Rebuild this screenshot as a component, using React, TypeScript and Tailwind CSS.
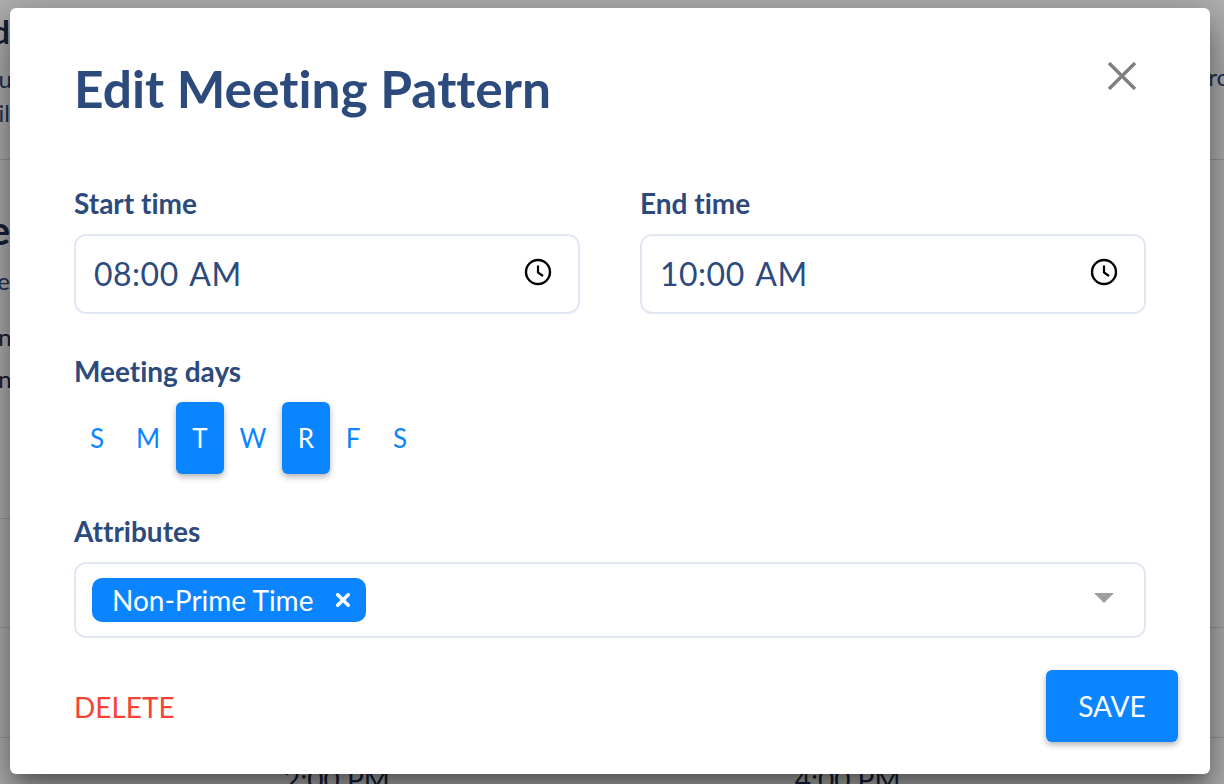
const font = "font-['Lato','Liberation_Sans',sans-serif] [font-variant-ligatures:none]";

const ClockIcon = () => (
  <svg width="28" height="28" viewBox="0 0 28 28" fill="none" stroke="#000" strokeWidth="2.4">
    <circle cx="14" cy="14" r="12" />
    <path d="M14 7.5V14.5L19 18" strokeWidth="2.2" />
  </svg>
);

const CloseIcon = ({ size, width }: { size: number; width: number }) => (
  <svg width={size} height={size} viewBox="0 0 28 28" fill="none" stroke="currentColor" strokeWidth={width}>
    <path d="M1 1L27 27M27 1L1 27" />
  </svg>
);

const TimeField = ({ label, value }: { label: string; value: string }) => (
  <div className="flex flex-col">
    <label className="-mt-px h-[40px] text-[28px] leading-[40px] font-bold text-[#2c4a7c]">{label}</label>
    <div className="mt-[11px] flex h-[80px] items-center justify-between rounded-[12px] border-2 border-[#e2e8f3] pl-[18px] pr-[26px]">
      <span className="text-[32px] tracking-[0.5px] whitespace-pre text-[#2c4a7c] [word-spacing:3px]">{value}</span>
      <span className="-mt-[4px] flex"><ClockIcon /></span>
    </div>
  </div>
);

const days = [
  { d: "S", w: "w-[46px]" },
  { d: "M", w: "w-[56px]" },
  { d: "T", w: "w-[48px]", on: true },
  { d: "W", w: "w-[58px]" },
  { d: "R", w: "w-[48px]", on: true },
  { d: "F", w: "w-[46px]" },
  { d: "S", w: "w-[48px]" },
];

const Background = () => (
  <div className="h-[784px] overflow-hidden bg-white text-[#1f3050]">
    <div className="flex h-[160px] justify-between border-b border-[#d5dbe5]">
      <div className="flex w-[10px] flex-col items-end">
        <span className="mt-[8px] whitespace-nowrap text-[32px] leading-[48px] font-bold">d</span>
        <span className="-mr-[2px] mt-[6px] whitespace-nowrap text-[24px] leading-[34px] text-[#2c4a7c]">u</span>
        <span className="whitespace-nowrap text-[24px] leading-[34px] text-[#2c4a7c]">il</span>
      </div>
      <span className="-mr-[6px] mt-[60px] h-[34px] text-[24px] leading-[34px] text-[#2c4a7c]">ro</span>
    </div>
    <div className="flex h-[359px] w-[10px] flex-col items-end border-b border-[#d5dbe5]">
      <span className="mt-[46px] text-[40px] leading-[48px] font-bold">e</span>
      <span className="mt-[10px] text-[24px] leading-[34px] text-[#2c4a7c]">e</span>
      <span className="-mr-[14px] mt-[20px] text-[24px] leading-[38px]">ng</span>
      <span className="-mr-[14px] mt-[4px] text-[24px] leading-[38px]">ng</span>
    </div>
    <div className="h-[109px] border-b border-[#d5dbe5]" />
    <div className="h-[110px] border-b border-[#d5dbe5]" />
    <div className="flex pt-[24px] text-[28px] leading-[34px]">
      <span className="ml-[284px]">2:00 PM</span>
      <span className="ml-[405px]">4:00 PM</span>
    </div>
  </div>
);

export default function App() {
  return (
    <div className={`relative h-[784px] w-[1224px] overflow-hidden ${font}`}>
      <Background />
      <div className="absolute inset-0 flex items-start bg-black/30 pl-[10px] pt-[8px]">
        <div className="flex h-[766px] w-[1200px] flex-col rounded-[6px] bg-white pl-[64px] pr-[32px] shadow-[0_11px_15px_-7px_rgba(0,0,0,0.3),0_24px_38px_3px_rgba(0,0,0,0.22),0_9px_46px_8px_rgba(0,0,0,0.22)]">
          <div className="flex items-start justify-between">
            <h1 className="mt-[48px] text-[51.5px] leading-[64px] font-bold text-[#2c4a7c]">Edit Meeting Pattern</h1>
            <button className="mt-[54px] mr-[42px] flex text-[#808080]">
              <CloseIcon size={28} width={3.4} />
            </button>
          </div>

          <div className="mt-[64px] grid grid-cols-[506px_506px] gap-x-[60px]">
            <TimeField label="Start time" value="08:00 AM" />
            <TimeField label="End time" value="10:00 AM" />
          </div>

          <label className="mt-[37px] h-[40px] text-[28px] leading-[40px] font-bold text-[#2c4a7c]">Meeting days</label>
          <div className="mt-[11px] flex h-[72px]">
            {days.map((x, i) => (
              <div
                key={i}
                className={`flex h-[72px] items-center justify-center rounded-[6px] text-[26px] ${x.w} ${
                  x.on ? "bg-[#0a84ff] text-white shadow-[0_3px_6px_rgba(0,0,0,0.3)]" : "text-[#0a84ff]"
                }`}
              >
                {x.d}
              </div>
            ))}
          </div>

          <label className="mt-[37px] h-[40px] text-[28px] leading-[40px] font-bold text-[#2c4a7c]">Attributes</label>
          <div className="mt-[11px] flex h-[76px] w-[1072px] items-center justify-between rounded-[12px] border-2 border-[#e2e8f3] pl-[16px] pr-[30px]">
            <div className="flex h-[44px] items-center rounded-[10px] bg-[#0a84ff] pl-[20px] pr-[16px] text-white">
              <span className="-mt-px text-[28px]">Non-Prime Time</span>
              <span className="ml-[23px] flex"><CloseIcon size={14} width={7} /></span>
            </div>
            <div className="-mt-[4px] h-0 w-0 border-x-[10px] border-t-[10px] border-x-transparent border-t-[#9e9e9e]" />
          </div>

          <div className="mt-[32px] flex items-start justify-between">
            <button className="mt-[16px] text-[28px] leading-[42px] text-[#f44336]">DELETE</button>
            <button className="flex h-[72px] w-[132px] items-center justify-center rounded-[6px] bg-[#0a84ff] text-[28px] text-white shadow-[0_3px_6px_rgba(0,0,0,0.3)]">
              SAVE
            </button>
          </div>
        </div>
      </div>
    </div>
  );
}
